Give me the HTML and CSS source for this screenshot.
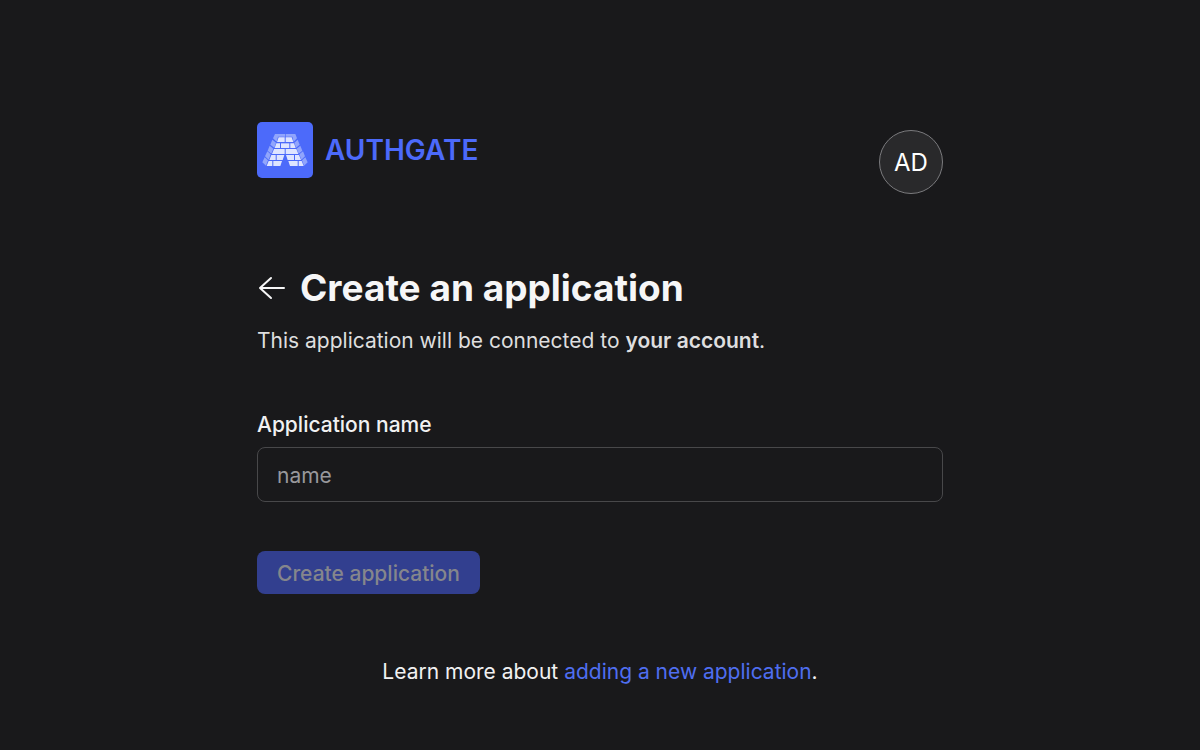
FILE: index.html
```html
<!DOCTYPE html>
<html lang="en">
  <head>
    <meta charset="UTF-8" />
    <meta name="viewport" content="width=device-width, initial-scale=1" />
    <title>Create an application - Authgate</title>
    <link rel="stylesheet" href="styles.css">
  </head>
  <body>
    <div class="container">
      <header class="header">
        <a class="brand" href="#">
          <svg class="logo" viewBox="0 0 168 168" aria-hidden="true">
            <rect width="168" height="168" rx="15" fill="#4c6afa" />
            <!-- brick sides -->
            <g fill="#91a5fc">
              <path d="M54 36H84V44H63L59 59L48 49Z" />
              <path d="M86 36H115L120 49L110 59L106 44H86Z" />
              <path d="M46 53L57 62L52 77L40 68Z" />
              <path d="M122 53L112 62L117 77L128 68Z" />
              <path d="M38 71L49 80L43 95L32 86Z" />
              <path d="M130 71L119 80L125 95L136 86Z" />
              <path d="M31 88L41 97L35 113L24 103Z" />
              <path d="M138 88L127 97L133 113L144 103Z" />
              <path d="M23 106L33 115L27 131L16 121Z" />
              <path d="M145 106L135 115L141 131L152 121Z" />
            </g>
            <!-- brick fronts -->
            <g fill="#dfe5ff">
              <path d="M65 46H83V60H60Z" />
              <path d="M86 46H104L109 60H86Z" />
              <path d="M58 64H69V78H53Z" />
              <path d="M72 64H97V78H72Z" />
              <path d="M100 64H111L116 78H100Z" />
              <path d="M51 81H83V96H45Z" />
              <path d="M86 81H118L124 96H86Z" />
              <path d="M43 99H56V114H37Z" />
              <path d="M59 99H82L77 114H59Z" />
              <path d="M87 99H111V114H92Z" />
              <path d="M114 99H126L132 114H114Z" />
              <path d="M35 117H46V132H29Z" />
              <path d="M49 117H75L70 132H49Z" />
              <path d="M94 117H122V132H99Z" />
              <path d="M125 117H134L140 132H125Z" />
            </g>
          </svg>
          <span>AUTHGATE</span>
        </a>
        <button class="avatar" type="button" aria-label="Account menu">AD</button>
      </header>

      <main>
        <div class="title">
          <a class="back" href="#" aria-label="Back">
            <svg viewBox="0 0 28 28" aria-hidden="true">
              <path d="M27 14H3M14 4L3 14L14 24" />
            </svg>
          </a>
          <h1>Create an application</h1>
        </div>
        <p class="subtitle">
          This application will be connected to <strong>your account</strong>.
        </p>

        <form>
          <label for="name">Application name</label>
          <input type="text" id="name" name="name" placeholder="name" />
          <button class="submit" type="submit" disabled>Create application</button>
        </form>

        <p class="help">
          Learn more about <a href="#">adding a new application</a>.
        </p>
      </main>
    </div>
  </body>
</html>
```

FILE: styles.css
```css
* {
  margin: 0;
  padding: 0;
  box-sizing: border-box;
}
body {
  font-family: Inter, sans-serif;
  font-size: 21px;
  line-height: 34px;
  background: #19191b;
  color: #f1f1f2;
}
a {
  color: #4f6ef0;
  text-decoration: none;
}
.container {
  width: 100%;
  max-width: 718px;
  margin: 0 auto;
  padding: 122px 16px 32px;
}
.header {
  display: flex;
  justify-content: space-between;
  align-items: flex-start;
  margin-bottom: 72px;
}
.brand {
  display: flex;
  align-items: center;
  gap: 12px;
  color: #4c6afa;
  font-size: 28px;
  font-weight: 600;
}
.logo {
  width: 56px;
  height: 56px;
}
.avatar {
  width: 64px;
  height: 64px;
  margin-top: 8px;
  border: 1px solid #7b7b7e;
  border-radius: 50%;
  background: #29292b;
  color: #fff;
  font-family: inherit;
  font-size: 24px;
  cursor: pointer;
}
.title {
  display: flex;
  align-items: center;
  gap: 15px;
}
.back {
  width: 28px;
  height: 28px;
}
.back svg {
  display: block;
  fill: none;
  stroke: #f6f6f7;
  stroke-width: 2;
  stroke-linecap: round;
  stroke-linejoin: round;
}
h1 {
  color: #f6f6f7;
  font-size: 37px;
  line-height: 44px;
  font-weight: 700;
}
.subtitle {
  margin-top: 14px;
  color: #dededf;
}
.subtitle strong {
  font-weight: 600;
}
form {
  display: flex;
  flex-direction: column;
  align-items: flex-start;
  margin-top: 50px;
}
label {
  font-weight: 500;
}
input[type="text"] {
  width: 100%;
  height: 55px;
  margin-top: 5px;
  padding: 2px 19px 0;
  border: 1px solid #48484a;
  border-radius: 8px;
  background: transparent;
  color: inherit;
  font: inherit;
}
input[type="text"]::placeholder {
  color: #98989b;
}
input[type="text"]:focus {
  outline: none;
  border-color: #4c6afa;
}
.submit {
  height: 43px;
  margin-top: 49px;
  padding: 2px 20px 0;
  border: none;
  border-radius: 8px;
  background: #4c6afa;
  color: #fff;
  font-family: inherit;
  font-size: 21px;
  font-weight: 500;
  cursor: pointer;
}
.submit:disabled {
  background: #323f8f;
  color: #85868c;
  cursor: default;
}
.help {
  margin-top: 61px;
  text-align: center;
}
```
